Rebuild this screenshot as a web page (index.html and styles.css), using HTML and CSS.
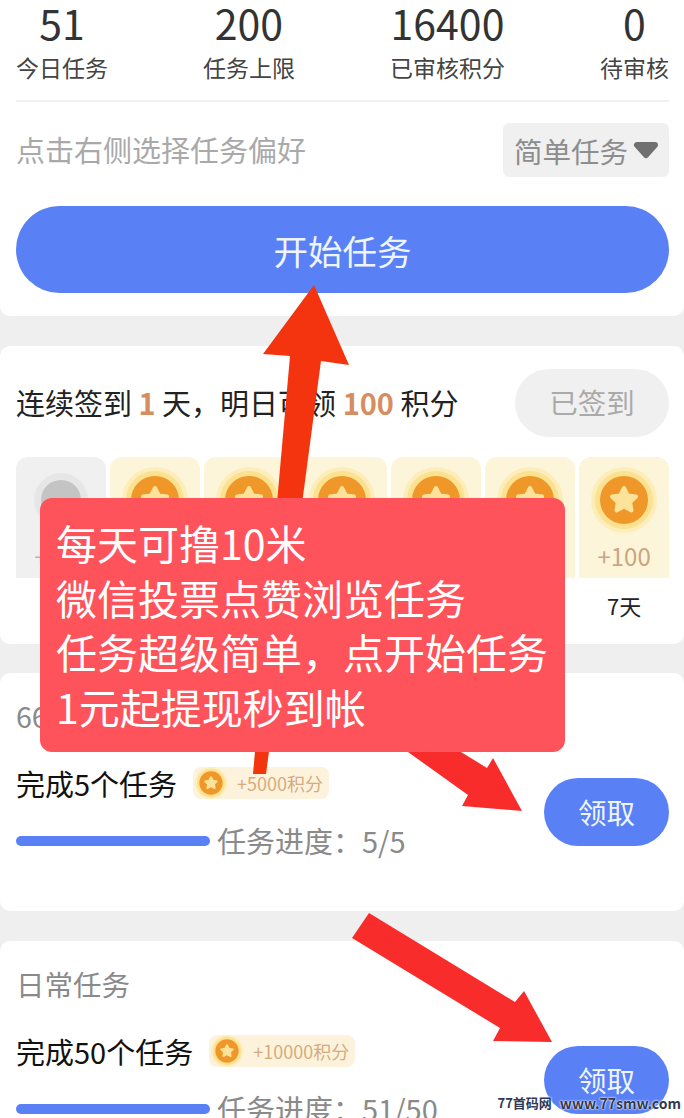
FILE: index.html
```html
<!DOCTYPE html>
<html lang="zh-CN">

<head>
    <meta charset="UTF-8">
    <meta name="viewport" content="width=device-width, initial-scale=1.0">
    <title>任务中心</title>
    <link rel="stylesheet" href="styles.css">
</head>

<body>
    <svg class="defs" width="0" height="0" aria-hidden="true">
        <symbol id="coin" viewBox="0 0 66 66">
            <circle cx="33" cy="33" r="33" fill="#fdedb9" />
            <circle cx="33" cy="33" r="29" fill="#fbe190" />
            <circle cx="33" cy="33" r="24" fill="#ef9728" />
            <path d="M33 21l3.8 7.4 8.2 1.2-5.9 5.7 1.4 8.1-7.5-3.9-7.5 3.9 1.4-8.1-5.9-5.7 8.2-1.2z" fill="#fde39a" stroke="#fde39a" stroke-width="4" stroke-linejoin="round" />
        </symbol>
        <symbol id="coin-off" viewBox="0 0 66 66">
            <circle cx="33" cy="33" r="27" fill="#e6e6e6" />
            <circle cx="33" cy="33" r="20" fill="#c4c4c4" />
        </symbol>
    </svg>

    <div class="page">
        <section class="card card-top">
            <div class="stats">
                <div class="stat"><div class="stat-num">51</div><div class="stat-label">今日任务</div></div>
                <div class="stat"><div class="stat-num">200</div><div class="stat-label">任务上限</div></div>
                <div class="stat"><div class="stat-num">16400</div><div class="stat-label">已审核积分</div></div>
                <div class="stat"><div class="stat-num">0</div><div class="stat-label">待审核</div></div>
            </div>
            <div class="pref">
                <span class="pref-hint">点击右侧选择任务偏好</span>
                <div class="pref-select">
                    <span>简单任务</span>
                    <svg class="caret" viewBox="0 0 28 18" width="28" height="18"><path d="M5 4h18l-9 10z" fill="#707070" stroke="#707070" stroke-width="6" stroke-linejoin="round" /></svg>
                </div>
            </div>
            <button class="start-btn">开始任务</button>
        </section>

        <section class="card card-sign">
            <div class="sign-head">
                <p class="sign-text">连续签到 <b>1</b> 天，明日可领 <b>100</b> 积分</p>
                <button class="signed-btn">已签到</button>
            </div>
            <div class="days">
                <div class="day">
                    <div class="day-box off"><svg class="coin" width="66" height="66"><use href="#coin-off" /></svg><span>+100</span></div>
                    <div class="day-name">1天</div>
                </div>
                <div class="day">
                    <div class="day-box"><svg class="coin" width="66" height="66"><use href="#coin" /></svg><span>+100</span></div>
                    <div class="day-name">2天</div>
                </div>
                <div class="day">
                    <div class="day-box"><svg class="coin" width="66" height="66"><use href="#coin" /></svg><span>+100</span></div>
                    <div class="day-name">3天</div>
                </div>
                <div class="day">
                    <div class="day-box"><svg class="coin" width="66" height="66"><use href="#coin" /></svg><span>+100</span></div>
                    <div class="day-name">4天</div>
                </div>
                <div class="day">
                    <div class="day-box"><svg class="coin" width="66" height="66"><use href="#coin" /></svg><span>+100</span></div>
                    <div class="day-name">5天</div>
                </div>
                <div class="day">
                    <div class="day-box"><svg class="coin" width="66" height="66"><use href="#coin" /></svg><span>+100</span></div>
                    <div class="day-name">6天</div>
                </div>
                <div class="day">
                    <div class="day-box"><svg class="coin" width="66" height="66"><use href="#coin" /></svg><span>+100</span></div>
                    <div class="day-name">7天</div>
                </div>
            </div>
        </section>

        <section class="card card-task">
            <h2 class="task-title">66任务</h2>
            <div class="task">
                <div class="task-main">
                    <div class="task-name">
                        <span>完成5个任务</span>
                        <span class="reward"><svg class="reward-coin" width="32" height="32"><use href="#coin" /></svg>+5000积分</span>
                    </div>
                    <div class="progress">
                        <div class="progress-bar"></div>
                        <span>任务进度：5/5</span>
                    </div>
                </div>
                <button class="claim-btn">领取</button>
            </div>
        </section>

        <section class="card card-task">
            <h2 class="task-title">日常任务</h2>
            <div class="task">
                <div class="task-main">
                    <div class="task-name">
                        <span>完成50个任务</span>
                        <span class="reward"><svg class="reward-coin" width="32" height="32"><use href="#coin" /></svg>+10000积分</span>
                    </div>
                    <div class="progress">
                        <div class="progress-bar"></div>
                        <span>任务进度：51/50</span>
                    </div>
                </div>
                <button class="claim-btn">领取</button>
            </div>
        </section>

        <!-- annotations pasted over the screenshot -->
        <svg class="arrows" viewBox="0 0 684 1118" width="684" height="1118" aria-hidden="true">
            <path d="M314 285L349 365 321 361 266 774 253 774 290 356 263 354z" fill="#f4340f" />
            <path d="M408 752L461 752 487 768 493 758 522 811 462 806 468 795z" fill="#f92c2c" />
            <path d="M369 913L515 1002 524 991 552 1042 493 1041 500 1028 352 938z" fill="#f92c2c" />
        </svg>

        <div class="notice">
            <p>每天可撸10米</p>
            <p>微信投票点赞浏览任务</p>
            <p>任务超级简单，点开始任务</p>
            <p>1元起提现秒到帐</p>
        </div>

        <div class="watermark"><span class="watermark-name">77首码网</span><span>www.77smw.com</span></div>
    </div>
</body>

</html>
```

FILE: styles.css
```css
:root {
    --blue: #5a80f6;
    --gray-bg: #efefef;
    --gray-text: #8a8a8a;
    --dark-text: #222;
    --orange-text: #d68d62;
}

* {
    margin: 0;
    padding: 0;
    box-sizing: border-box;
}

body {
    font-family: "Noto Sans CJK SC", "Noto Sans", sans-serif;
    color: var(--dark-text);
    background: var(--gray-bg);
}

button {
    font-family: inherit;
    border: none;
    cursor: pointer;
}

.defs {
    position: absolute;
}

.page {
    position: relative;
    height: 1118px;
    overflow: hidden;
}

.card {
    background: #fff;
    border-radius: 10px;
    padding: 0 15px 0 16px;
}

/* top card */
.card-top {
    padding-top: 2px;
    padding-bottom: 23px;
    margin-bottom: 30px;
    border-radius: 0 0 10px 10px;
}

.stats {
    display: flex;
    justify-content: space-between;
    height: 100px;
    border-bottom: 2px solid #f1f1f1;
}

.stat {
    text-align: center;
}

.stat-num {
    font-size: 41px;
    line-height: 48px;
    margin-top: -4px;
    color: #333;
}

.stat-label {
    font-size: 23px;
    line-height: 30px;
    margin-top: 6px;
    color: #444;
}

.pref {
    display: flex;
    justify-content: space-between;
    align-items: center;
    margin-top: 21px;
}

.pref-hint {
    font-size: 29px;
    line-height: 50px;
    margin-bottom: 2px;
    color: #a9a9a9;
}

.pref-select {
    display: flex;
    align-items: center;
    gap: 4px;
    width: 166px;
    height: 54px;
    padding-left: 11px;
    background: #f0f0f0;
    border-radius: 6px;
    font-size: 28.5px;
    color: #8d8d8d;
}

.start-btn {
    display: block;
    width: 100%;
    height: 87px;
    margin-top: 29px;
    background: var(--blue);
    border-radius: 44px;
    color: #eef5f6;
    font-size: 34.5px;
}

/* sign in card */
.card-sign {
    padding-top: 23px;
    padding-bottom: 24px;
    margin-bottom: 29px;
}

.sign-head {
    display: flex;
    justify-content: space-between;
    align-items: center;
}

.sign-text {
    font-size: 29px;
    margin-bottom: 3px;
    color: var(--dark-text);
}

.sign-text b {
    color: var(--orange-text);
}

.signed-btn {
    width: 154px;
    height: 68px;
    padding-bottom: 3px;
    background: #f0f0f0;
    border-radius: 34px;
    color: #aaa;
    font-size: 28.5px;
}

.days {
    display: grid;
    grid-template-columns: repeat(7, 1fr);
    gap: 4px;
    margin-top: 20px;
}

.day-box {
    display: flex;
    flex-direction: column;
    align-items: center;
    height: 121px;
    padding-top: 10px;
    background: #fdf5d9;
    border-radius: 12px 12px 0 0;
    color: #c9a582;
    font-size: 24px;
}

.day-box span {
    line-height: 32px;
    margin-top: 7px;
}

.day-box.off {
    background: #f0f0f0;
    color: #b5b5b5;
}

.day-name {
    margin-top: 12px;
    text-align: center;
    font-size: 22px;
    line-height: 30px;
}

/* task cards */
.card-task {
    padding-top: 27px;
    padding-bottom: 54px;
    margin-bottom: 30px;
}

.task-title {
    font-size: 28.5px;
    font-weight: normal;
    line-height: 32px;
    color: var(--gray-text);
    margin-bottom: 35px;
}

.task {
    display: flex;
    justify-content: space-between;
    align-items: center;
}

.task-name {
    display: flex;
    align-items: center;
    gap: 16px;
    height: 32px;
    font-size: 29px;
    color: #111;
}

.reward {
    display: flex;
    align-items: center;
    gap: 10px;
    height: 32px;
    padding: 0 6px 0 2px;
    background: #fdf3dc;
    border-radius: 8px;
    font-size: 18px;
    color: #d6ab7c;
}

.progress {
    display: flex;
    align-items: center;
    gap: 7px;
    height: 32px;
    margin-top: 25px;
    margin-bottom: 1px;
    font-size: 29px;
    color: var(--gray-text);
}

.progress-bar {
    width: 194px;
    height: 10px;
    margin-top: 2px;
    background: var(--blue);
    border-radius: 5px;
}

.claim-btn {
    width: 125px;
    height: 68px;
    padding-bottom: 2px;
    background: var(--blue);
    border-radius: 34px;
    color: #eef5f6;
    font-size: 28.5px;
}

/* overlays */
.arrows {
    position: absolute;
    top: 0;
    left: 0;
}

.notice {
    position: absolute;
    top: 498px;
    left: 40px;
    width: 525px;
    height: 254px;
    padding: 17px 0 0 16px;
    background: #ff535c;
    border-radius: 12px;
    color: #fff;
    font-size: 41px;
    line-height: 54.5px;
    white-space: nowrap;
}

.watermark {
    position: absolute;
    top: 1094px;
    right: 3px;
    display: flex;
    align-items: center;
    gap: 8px;
    font-size: 14px;
    font-weight: bold;
    line-height: 18px;
    color: #2e3a55;
    text-shadow: 0 0 2px #fff, 0 0 2px #fff;
}

.watermark-name {
    font-size: 13px;
}
```
